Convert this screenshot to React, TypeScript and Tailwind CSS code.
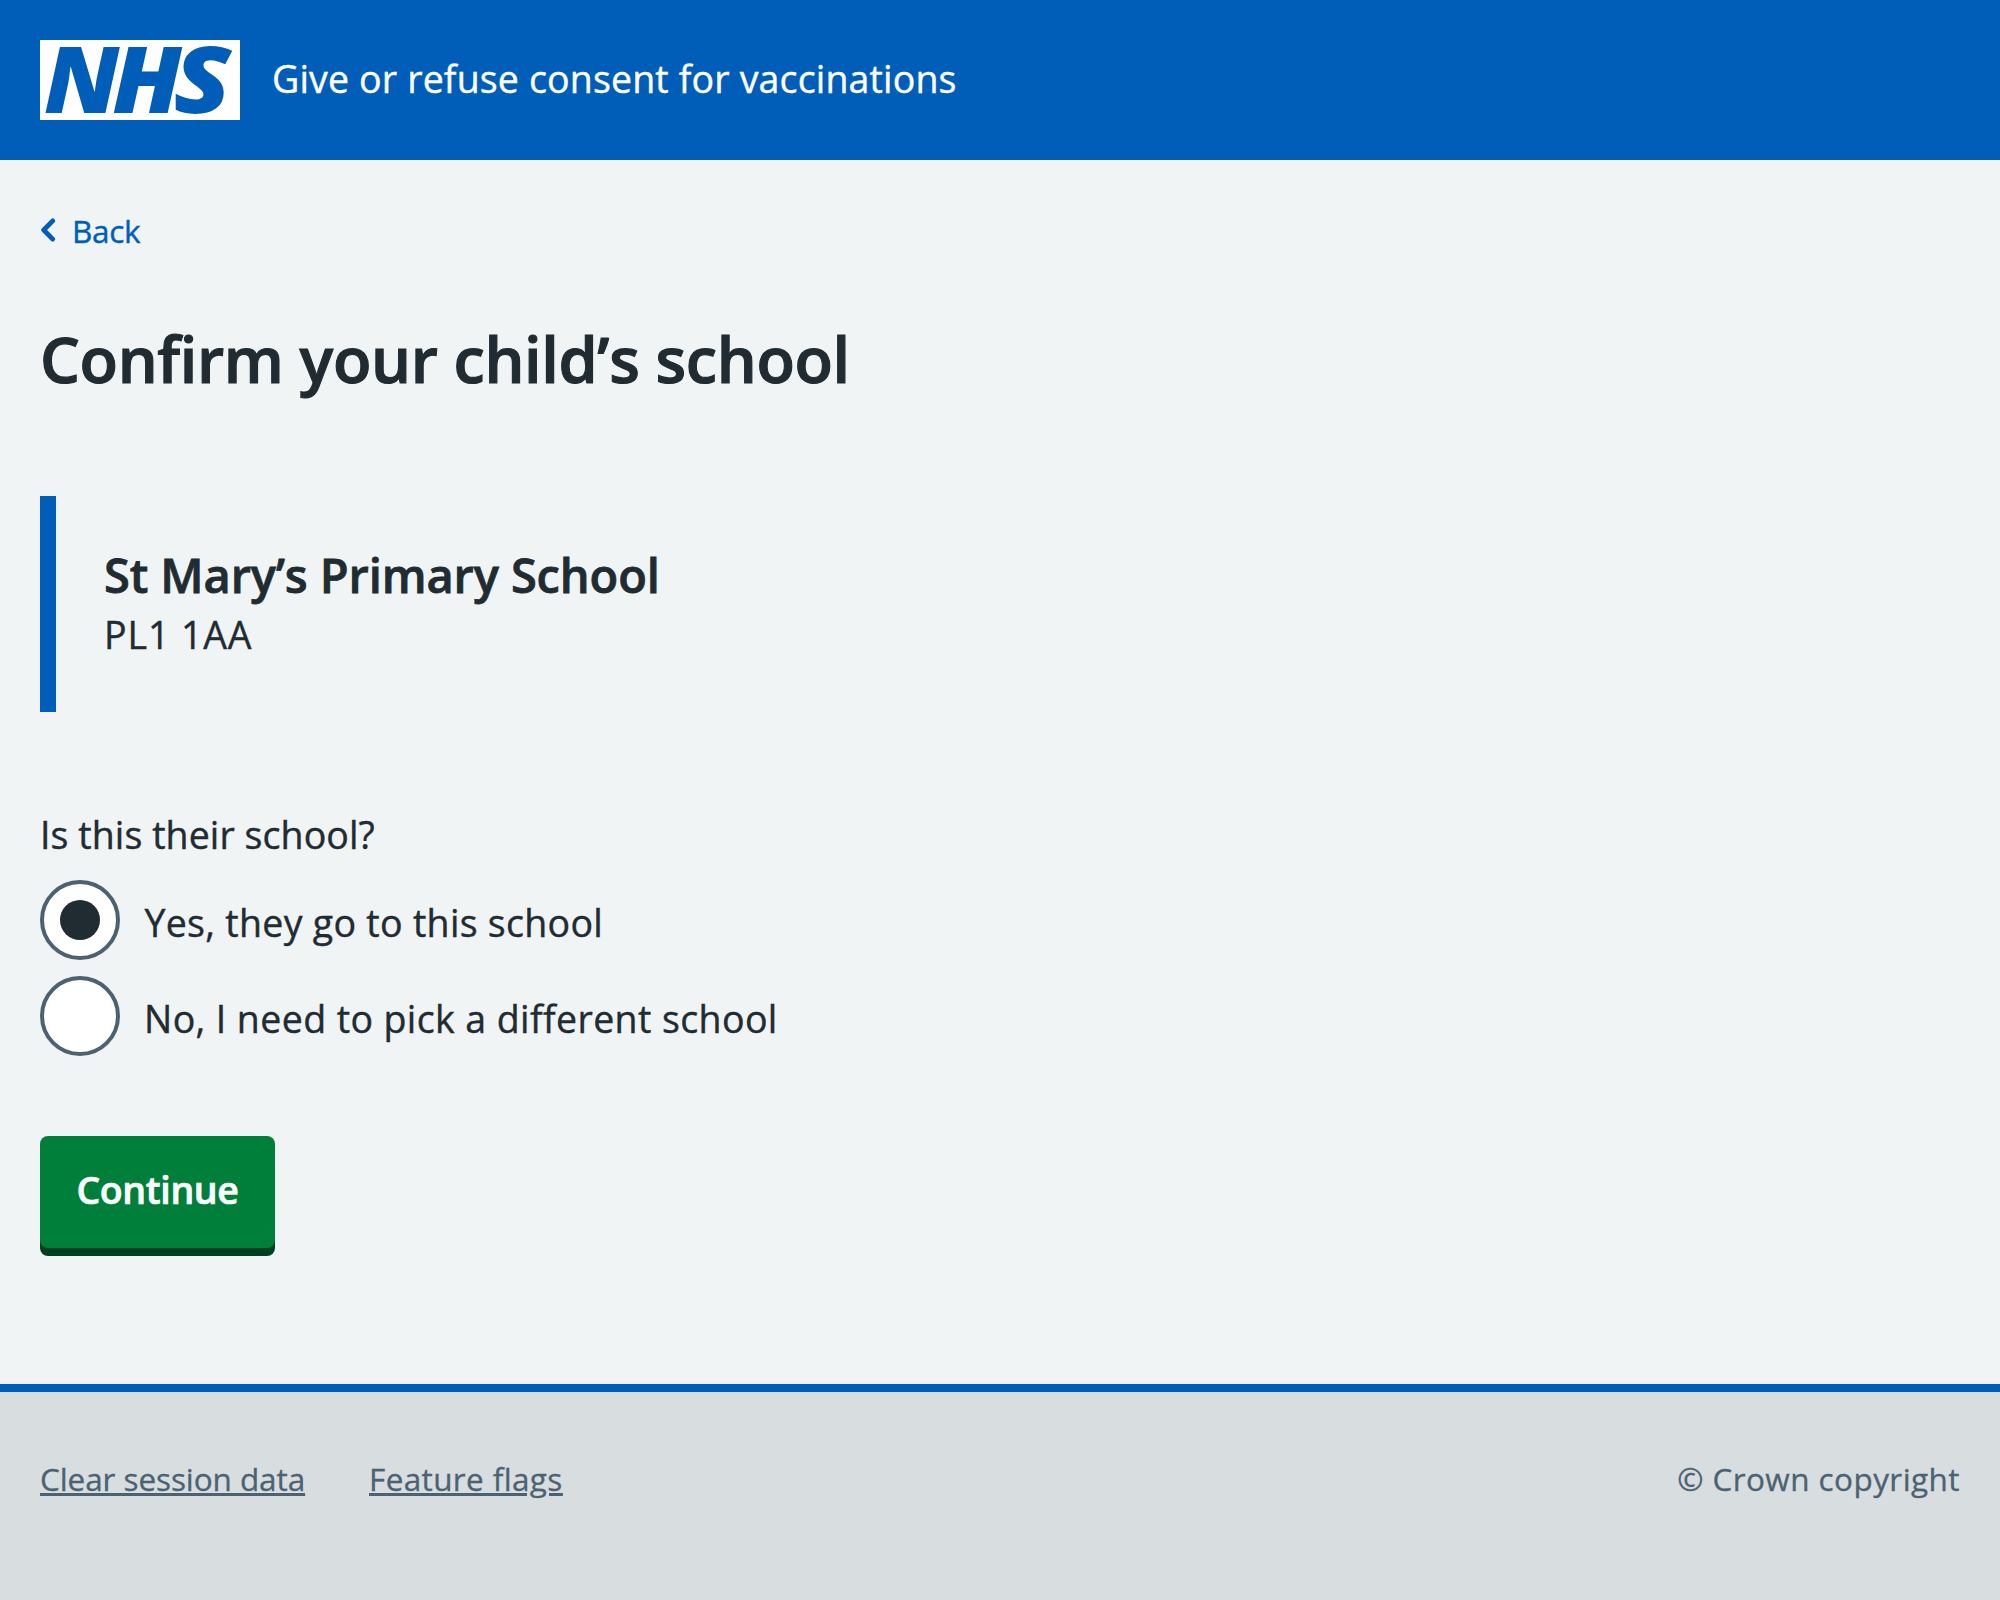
const options = [
  { label: "Yes, they go to this school", checked: true, spacing: "ml-[24.5px] tracking-[0.3px]" },
  { label: "No, I need to pick a different school", checked: false, spacing: "ml-6 tracking-[0.4px]" },
];

function NhsLogo() {
  return (
    <svg width="200" height="80" viewBox="0 0 200 80" role="img" aria-label="NHS" className="shrink-0 overflow-visible">
      <rect width="200" height="80" fill="#fff" />
      <g fill="#005eb8" fontFamily="Noto Sans, sans-serif" fontSize="91.5" fontWeight="900" fontStyle="italic">
        <text transform="translate(4 72.7) scale(1.042 1)">N</text>
        <text transform="translate(72.3 72.7) scale(1.065 1)">H</text>
        <text transform="translate(133.6 72.7) scale(1.15 1)">S</text>
      </g>
    </svg>
  );
}

export default function App() {
  return (
    <div className="flex min-h-[1600px] w-full flex-col bg-[#f0f4f5] font-['Open_Sans','Noto_Sans',sans-serif] text-[#212b32]">
      <header className="flex h-40 items-center bg-[#005eb8] px-10">
        <NhsLogo />
        <span className="ml-8 pb-[3px] text-[37.5px] leading-[56px] tracking-[0.16px] text-white [-webkit-text-stroke:0.4px_#fff]">
          Give or refuse consent for vaccinations
        </span>
      </header>

      <main className="flex flex-col items-start px-10 pt-[47px] pb-[136px] [-webkit-text-stroke:0.4px]">
        <a className="flex h-12 items-center text-[31.5px] leading-[48px] tracking-[-0.3px] text-[#005eb8]">
          <svg width="16" height="26" viewBox="0 0 16 26" fill="none" className="mr-4">
            <path d="M12.7 2.9 3.7 12 12.7 21.1" stroke="#005eb8" strokeWidth="4.8" strokeLinecap="round" strokeLinejoin="round" />
          </svg>
          Back
        </a>

        <h1 className="mt-[68px] text-[63px] leading-[72px] font-semibold tracking-[-0.36px] [-webkit-text-stroke:1.1px_#212b32]">
          Confirm your child’s school
        </h1>

        <div className="mt-[101px] h-[216px] border-l-16 border-[#005eb8] pt-[51px] pl-12">
          <h2 className="text-[47px] leading-[56px] font-semibold tracking-[-0.11px] [-webkit-text-stroke:0.8px_#212b32]">
            St Mary’s Primary School
          </h2>
          <p className="mt-[3px] text-[37.5px] leading-[57px] tracking-[0.9px]">PL1 1AA</p>
        </div>

        <fieldset className="mt-[94px]">
          <legend className="text-[37.5px] leading-[57px] tracking-[0.08px]">Is this their school?</legend>
          <div className="mt-[17px] flex flex-col gap-4">
            {options.map((o) => (
              <label key={o.label} className="flex h-20 items-center">
                <span className="flex size-20 items-center justify-center rounded-full border-4 border-[#4c6272] bg-white">
                  {o.checked && <span className="size-10 rounded-full bg-[#212b32]" />}
                </span>
                <span className={`pt-[5px] text-[37.5px] leading-[56px] ${o.spacing}`}>{o.label}</span>
              </label>
            ))}
          </div>
        </fieldset>

        <button className="mt-20 h-28 w-[235px] rounded-lg bg-[#007f3b] pb-[3px] text-[37.5px] font-semibold tracking-[-0.36px] text-white shadow-[0_8px_0_#00401e] [-webkit-text-stroke:0.7px_#fff]">
          Continue
        </button>
      </main>

      <footer className="flex flex-1 items-start justify-between border-t-8 border-[#005eb8] bg-[#d8dde0] px-10 pt-[63px] text-[31.5px] leading-[48px] text-[#4c6272] [-webkit-text-stroke:0.3px]">
        <nav className="flex gap-16 underline decoration-[2.7px] underline-offset-2">
          <a className="tracking-[-0.09px]">Clear session data</a>
          <a className="tracking-[0.36px]">Feature flags</a>
        </nav>
        <p className="tracking-[0.43px]">© Crown copyright</p>
      </footer>
    </div>
  );
}
